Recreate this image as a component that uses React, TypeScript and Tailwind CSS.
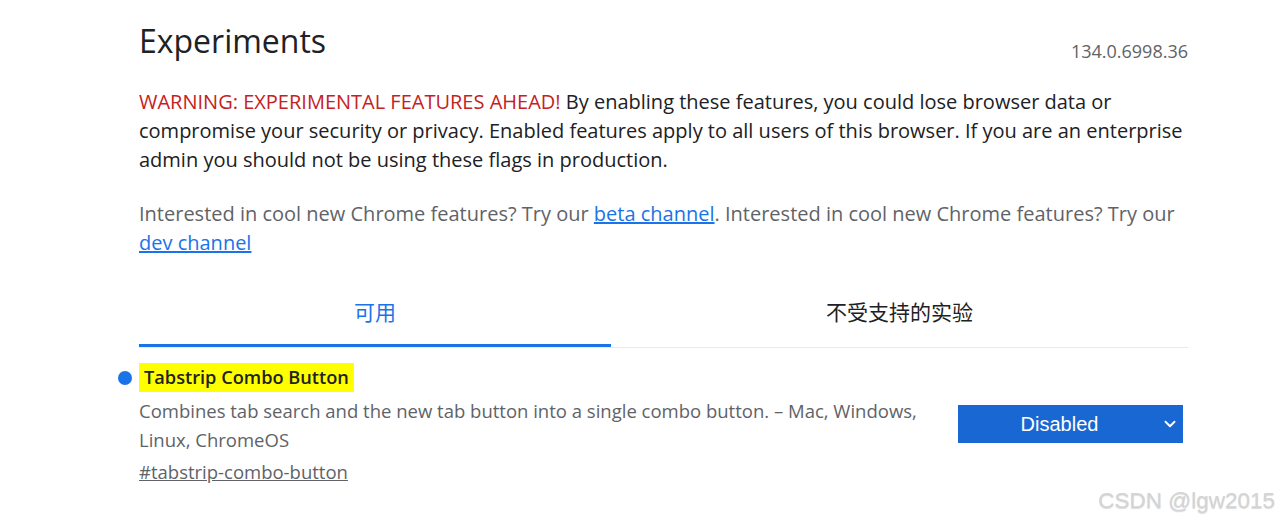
import { ChevronDown } from 'lucide-react';

export default function App() {
  return (
    <div className="relative h-[525px] w-[1281px] overflow-hidden bg-white font-['Open_Sans','Noto_Sans_CJK_SC',sans-serif]">
      <div className="ml-[139px] w-[1049px]">
        <div className="flex items-start justify-between pt-[19px]">
          <h1 className="text-[32px] leading-[44px] text-[#202124]">Experiments</h1>
          <span className="mt-[19px] text-[18px] text-[#5f6368]">134.0.6998.36</span>
        </div>

        <p className="mt-[22px] text-[20px] leading-[29px] text-[#202124]">
          <span className="text-[#c5221f]">WARNING: EXPERIMENTAL FEATURES AHEAD!</span> By enabling these features, you could lose browser data or compromise your security or privacy. Enabled features apply to all users of this browser. If you are an enterprise admin you should not be using these flags in production.
        </p>

        <p className="mt-[25px] text-[20px] leading-[29px] text-[#5f6368]">
          Interested in cool new Chrome features? Try our <a className="text-[#1a73e8] underline">beta channel</a>. Interested in cool new Chrome features? Try our <a className="text-[#1a73e8] underline">dev channel</a>
        </p>

        <div className="mt-[35px] flex border-b border-[#e8eaed]">
          <div className="flex h-[55px] w-[472px] items-start justify-center border-b-[3px] border-[#1a73e8] pt-[6px] text-[21px] leading-[29px] text-[#1a73e8]">可用</div>
          <div className="flex h-[55px] flex-1 items-start justify-center pt-[6px] text-[21px] leading-[29px] text-[#202124]">不受支持的实验</div>
        </div>

        <div className="relative mt-[15px] flex items-start justify-between">
          <span className="absolute -left-[21px] top-[8px] h-[14px] w-[14px] rounded-full bg-[#1a73e8]" />
          <div>
            <h2 className="inline-block bg-[#ffff00] px-[5px] text-[18.2px] font-semibold leading-[29px] text-[#202124]">Tabstrip Combo Button</h2>
            <p className="mt-[4px] w-[800px] text-[18.5px] leading-[29px] text-[#5f6368]">
              Combines tab search and the new tab button into a single combo button. – Mac, Windows, Linux, ChromeOS
            </p>
            <a className="mt-[3px] block text-[18.5px] leading-[29px] text-[#5f6368] underline">#tabstrip-combo-button</a>
          </div>
          <div className="mr-[5px] mt-[42px] flex h-[38px] w-[225px] items-center bg-[#1967d2] pr-[4px] text-white">
            <span className="flex-1 text-center font-['Liberation_Sans',sans-serif] text-[20px]">Disabled</span>
            <ChevronDown className="h-[18px] w-[18px]" strokeWidth={2.5} />
          </div>
        </div>
      </div>

      <div className="absolute bottom-[7px] right-[6px] font-['Liberation_Sans',sans-serif] text-[22.5px] text-[#d4d4d4] [text-shadow:0_1px_1px_rgba(0,0,0,0.15)]">CSDN @lgw2015</div>
    </div>
  );
}
